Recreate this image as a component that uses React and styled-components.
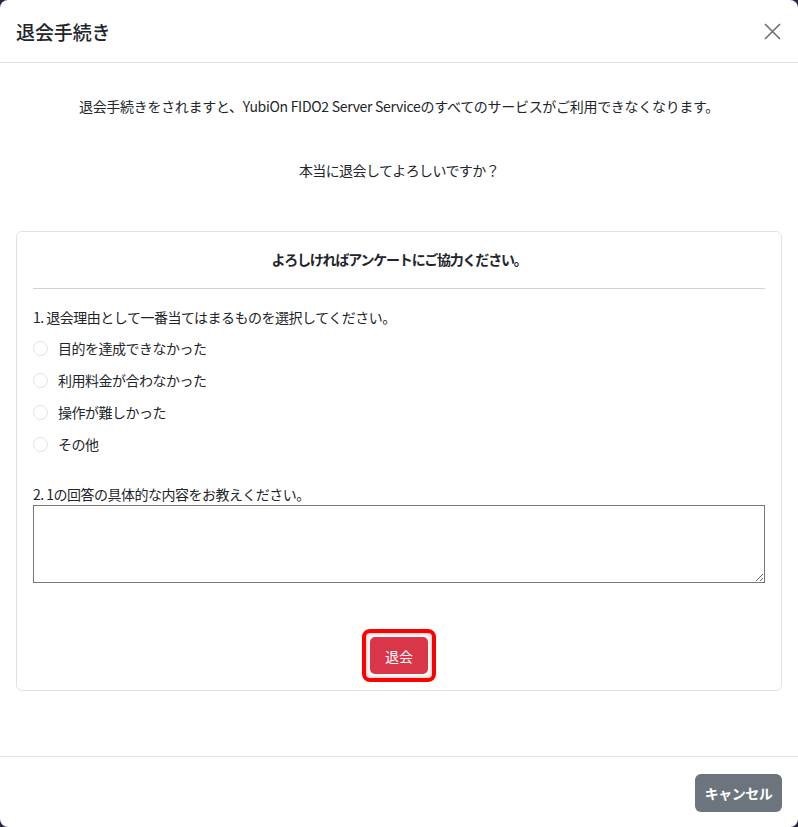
import React from 'react';
import styled, { createGlobalStyle } from 'styled-components';

const GlobalStyle = createGlobalStyle`
    html, body {
        margin: 0;
        padding: 0;
        background: #2b2140;
    }
    body {
        font-family: "Noto Sans CJK JP", "Noto Sans", sans-serif;
        color: #212529;
        font-size: 14px;
    }
`;

const Modal = styled.div`
    width: 798px;
    height: 827px;
    background: #ffffff;
    border-radius: 8px;
    display: flex;
    flex-direction: column;
    overflow: hidden;
`;

const Header = styled.div`
    height: 62px;
    padding: 0 16px;
    display: flex;
    align-items: center;
    justify-content: space-between;
    border-bottom: 1px solid #dee2e6;
`;

const Title = styled.h5`
    margin: 0;
    font-size: 19px;
    font-weight: 500;
    letter-spacing: -0.1px;
`;

const CloseButton = styled.button`
    border: none;
    background: transparent;
    padding: 0;
    width: 20px;
    height: 20px;
    display: flex;
    align-items: center;
    justify-content: center;
    cursor: pointer;
`;

const Body = styled.div`
    flex: 1;
    padding: 33px 16px 0;
`;

const Message = styled.p`
    margin: 0 0 ${p => p.gap}px;
    text-align: center;
    line-height: 21px;
    letter-spacing: ${p => p.spacing}px;
`;

const Card = styled.div`
    border: 1px solid #dee2e6;
    border-radius: 6px;
    padding: 17px 16px 0;
    height: 460px;
    box-sizing: border-box;
`;

const CardTitle = styled.div`
    text-align: center;
    font-weight: 700;
    line-height: 21px;
    letter-spacing: -1.2px;
`;

const Divider = styled.hr`
    margin: 18px 0 18px;
    border: none;
    border-top: 1px solid #cfd3d7;
`;

const Question = styled.div`
    line-height: 21px;
    letter-spacing: -0.5px;
`;

const RadioList = styled.div`
    display: flex;
    flex-direction: column;
    margin-top: 4px;
    margin-bottom: 24px;
`;

const RadioRow = styled.label`
    height: 32px;
    display: flex;
    align-items: center;
    gap: 10px;
    letter-spacing: -0.5px;
`;

const RadioCircle = styled.span`
    width: 13px;
    height: 13px;
    border: 1px solid #dee2e6;
    border-radius: 50%;
    flex-shrink: 0;
`;

const TextArea = styled.textarea`
    display: block;
    width: 100%;
    height: 78px;
    box-sizing: border-box;
    border: 1px solid #767676;
    border-radius: 0;
    margin: 0;
    font-family: inherit;
    resize: vertical;
`;

const ButtonRow = styled.div`
    display: flex;
    justify-content: center;
    margin-top: 46px;
`;

const FocusRing = styled.div`
    border: 4px solid #ff0000;
    border-radius: 8px;
    padding: 4px;
    box-shadow: inset 0 0 4px rgba(0, 0, 0, 0.35);
`;

const DangerButton = styled.button`
    width: 58px;
    height: 37px;
    border: none;
    border-radius: 5px;
    background: #d9364a;
    color: #ffffff;
    font-family: inherit;
    font-size: 14px;
    display: block;
`;

const Footer = styled.div`
    height: 70px;
    border-top: 1px solid #dee2e6;
    display: flex;
    align-items: center;
    justify-content: flex-end;
    padding: 0 16px;
`;

const SecondaryButton = styled.button`
    width: 87px;
    height: 38px;
    border: none;
    border-radius: 6px;
    background: #6c757d;
    color: #ffffff;
    font-family: inherit;
    font-size: 14px;
    font-weight: 700;
    letter-spacing: -0.5px;
    margin-top: 2px;
`;

const reasons = ['目的を達成できなかった', '利用料金が合わなかった', '操作が難しかった', 'その他'];

const App = () => (
    <>
        <GlobalStyle />
        <Modal>
            <Header>
                <Title>退会手続き</Title>
                <CloseButton aria-label="close">
                    <svg width="17" height="17" viewBox="0 0 17 17">
                        <path d="M1 1 L16 16 M16 1 L1 16" stroke="#6f6f6f" strokeWidth="1.6" />
                    </svg>
                </CloseButton>
            </Header>
            <Body>
                <Message gap={43} spacing={-0.3}>
                    退会手続きをされますと、YubiOn FIDO2 Server Serviceのすべてのサービスがご利用できなくなります。
                </Message>
                <Message gap={50} spacing={-0.6}>本当に退会してよろしいですか？</Message>
                <Card>
                    <CardTitle>よろしければアンケートにご協力ください。</CardTitle>
                    <Divider />
                    <Question>1. 退会理由として一番当てはまるものを選択してください。</Question>
                    <RadioList>
                        {reasons.map(r => (
                            <RadioRow key={r}>
                                <RadioCircle />
                                {r}
                            </RadioRow>
                        ))}
                    </RadioList>
                    <Question>2. 1の回答の具体的な内容をお教えください。</Question>
                    <TextArea />
                    <ButtonRow>
                        <FocusRing>
                            <DangerButton>退会</DangerButton>
                        </FocusRing>
                    </ButtonRow>
                </Card>
            </Body>
            <Footer>
                <SecondaryButton>キャンセル</SecondaryButton>
            </Footer>
        </Modal>
    </>
);

export default App;
